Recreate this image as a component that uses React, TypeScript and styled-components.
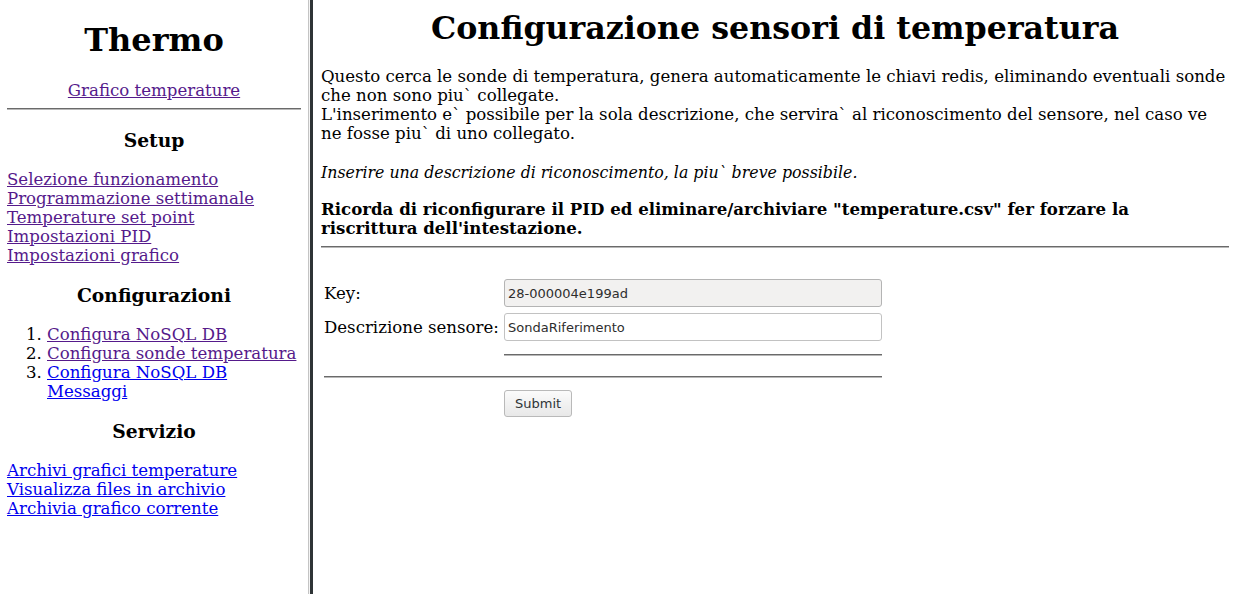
import React from 'react';
import styled, { createGlobalStyle } from 'styled-components';

const GlobalStyle = createGlobalStyle`
    html, body {
        margin: 0;
        padding: 0;
        background: #fff;
    }
    body {
        font-family: "DejaVu Serif", serif;
        font-size: 16px;
        color: #000;
    }
`;

const Frameset = styled.div`
    display: grid;
    grid-template-columns: 308px 5px 1fr;
    height: 100vh;
    overflow: hidden;
`;

const FrameBorder = styled.div`
    background: linear-gradient(to right, #c4c4c4 0 1px, #f4f4f4 1px 2px, #2e3436 2px 5px);
`;

const Frame = styled.div<{ $top?: number; $side?: number }>`
    padding: ${p => p.$top ?? 8}px ${p => p.$side ?? 8}px 8px;
    overflow: hidden;
    font-size: 16.6px;
    line-height: 19px;
`;

const Title = styled.h1<{ $top?: number; $bottom?: number; $size?: number }>`
    font-size: ${p => p.$size ?? 32}px;
    line-height: 37px;
    font-weight: bold;
    text-align: center;
    margin: ${p => p.$top ?? 0}px 0 ${p => p.$bottom ?? 21}px;
`;

const Section = styled.h3`
    font-size: 18.72px;
    line-height: 22px;
    text-align: center;
    margin: 19px 0;
`;

const Centered = styled.div`
    text-align: center;
`;

const Rule = styled.hr`
    height: 0;
    border: none;
    border-top: 1px solid #6a6a6a;
    border-bottom: 1px solid #b8b8b8;
    margin: 8px 0;
`;

const Link = styled.a<{ $visited?: boolean }>`
    color: ${p => (p.$visited ? '#551a8b' : '#0000ee')};
    text-decoration: underline;
    cursor: pointer;
`;

const LinkList = styled.div`
    display: flex;
    flex-direction: column;
    align-items: flex-start;
`;

const OrderedList = styled.ol`
    margin: 19px -4px 19px 0;
    padding-left: 40px;
`;

const Para = styled.p<{ $gap?: number }>`
    margin: 0 0 ${p => p.$gap ?? 0}px;
`;

const Note = styled.p`
    margin: 0 0 18px;
    font-style: italic;
    font-size: 15.8px;
`;

const Warning = styled.p`
    margin: 0;
    font-weight: bold;
`;

const FormTable = styled.table`
    border-spacing: 2px;
    margin-top: 27px;
    line-height: normal;
`;

const LabelCell = styled.td`
    width: 176px;
    padding: 1px;
    vertical-align: middle;
`;

const Cell = styled.td`
    padding: 1px;
`;

const TextInput = styled.input<{ $readOnly?: boolean }>`
    box-sizing: border-box;
    display: block;
    width: 378px;
    height: 28px;
    margin: 1px 0;
    padding: 0 3px;
    border: 1px solid ${p => (p.$readOnly ? '#b4b4b4' : '#c2c2c2')};
    border-radius: 3px;
    background: ${p => (p.$readOnly ? '#f2f1f0' : '#fff')};
    font-family: "DejaVu Sans", sans-serif;
    font-size: 13px;
    color: #2e2e2e;
`;

const SubmitButton = styled.button`
    box-sizing: border-box;
    height: 27px;
    padding: 0 10px;
    border: 1px solid #b9b9b9;
    border-radius: 3px;
    background: linear-gradient(#fbfbfb, #e8e8e8);
    font-family: "DejaVu Sans", sans-serif;
    font-size: 13px;
    color: #2e3436;
`;

const setupLinks = [
    'Selezione funzionamento',
    'Programmazione settimanale',
    'Temperature set point',
    'Impostazioni PID',
    'Impostazioni grafico',
];

const configLinks = [
    { label: 'Configura NoSQL DB', visited: true },
    { label: 'Configura sonde temperatura', visited: true },
    { label: 'Configura NoSQL DB Messaggi', visited: false },
];

const serviceLinks = [
    'Archivi grafici temperature',
    'Visualizza files in archivio',
    'Archivia grafico corrente',
];

const Menu: React.FC = () => (
    <Frame $side={7}>
        <Title $top={14} $bottom={22}>Thermo</Title>
        <Centered>
            <Link $visited>Grafico temperature</Link>
        </Centered>
        <Rule />
        <Section>Setup</Section>
        <LinkList>
            {setupLinks.map(l => (
                <Link key={l} $visited>{l}</Link>
            ))}
        </LinkList>
        <Section>Configurazioni</Section>
        <OrderedList>
            {configLinks.map(l => (
                <li key={l.label}>
                    <Link $visited={l.visited}>{l.label}</Link>
                </li>
            ))}
        </OrderedList>
        <Section>Servizio</Section>
        <LinkList>
            {serviceLinks.map(l => (
                <Link key={l}>{l}</Link>
            ))}
        </LinkList>
    </Frame>
);

const SensorConfig: React.FC = () => (
    <Frame $top={9}>
        <Title $size={31.7}>Configurazione sensori di temperatura</Title>
        <Para>
            Questo cerca le sonde di temperatura, genera automaticamente le chiavi redis, eliminando eventuali sonde
            che non sono piu` collegate.
        </Para>
        <Para $gap={20}>
            L'inserimento e` possibile per la sola descrizione, che servira` al riconoscimento del sensore, nel caso ve
            ne fosse piu` di uno collegato.
        </Para>
        <Note>Inserire una descrizione di riconoscimento, la piu` breve possibile.</Note>
        <Warning>
            Ricorda di riconfigurare il PID ed eliminare/archiviare "temperature.csv" fer forzare la riscrittura
            dell'intestazione.
        </Warning>
        <Rule />
        <FormTable>
            <tbody>
                <tr>
                    <LabelCell>Key:</LabelCell>
                    <Cell>
                        <TextInput $readOnly readOnly defaultValue="28-000004e199ad" />
                    </Cell>
                </tr>
                <tr>
                    <LabelCell>Descrizione sensore:</LabelCell>
                    <Cell>
                        <TextInput defaultValue="SondaRiferimento" />
                    </Cell>
                </tr>
                <tr>
                    <Cell />
                    <Cell>
                        <Rule />
                    </Cell>
                </tr>
                <tr>
                    <Cell colSpan={2}>
                        <Rule />
                    </Cell>
                </tr>
                <tr>
                    <Cell />
                    <Cell>
                        <SubmitButton>Submit</SubmitButton>
                    </Cell>
                </tr>
            </tbody>
        </FormTable>
    </Frame>
);

const App: React.FC = () => (
    <>
        <GlobalStyle />
        <Frameset>
            <Menu />
            <FrameBorder />
            <SensorConfig />
        </Frameset>
    </>
);

export default App;
